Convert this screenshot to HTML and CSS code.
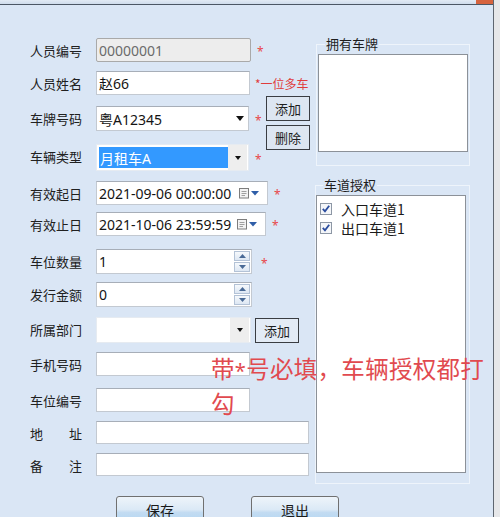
FILE: index.html
```html
<!DOCTYPE html>
<html lang="zh-CN">
<head>
<meta charset="utf-8">
<title>人员信息</title>
<link rel="stylesheet" href="styles.css">
</head>
<body>
<div class="window">
  <div class="titlebar"><span class="close"></span></div>
  <div class="content">
    <div class="form">
      <div class="lbl">人员编号</div>
      <div class="field"><div class="box disabled w155">00000001</div><span class="req">*</span></div>

      <div class="lbl">人员姓名</div>
      <div class="field"><div class="box w154">赵66</div><span class="hint">*一位多车</span></div>

      <div class="btnstack">
        <div class="sbtn">添加</div>
        <div class="sbtn">删除</div>
      </div>

      <div class="lbl">车牌号码</div>
      <div class="field"><div class="box combo w153 h25"><span class="txt">粤A12345</span><span class="arrow"></span></div><span class="req">*</span></div>

      <div class="lbl">车辆类型</div>
      <div class="field"><div class="box combo2 w153 h27"><span class="sel">月租车A</span><span class="dd"><span class="arrow small"></span></span></div><span class="req">*</span></div>

      <div class="lbl">有效起日</div>
      <div class="field"><div class="box date w172"><span class="txt">2021-09-06 00:00:00</span>
        <svg class="cal" width="12" height="12" viewBox="0 0 12 12"><rect x="1.5" y="1.5" width="9" height="9.5" fill="#f3f3f3" stroke="#7d7d7d"/><path d="M3.5 4.5h5M3.5 6.5h5M3.5 8.5h3.5" stroke="#a0a0a0"/></svg>
        <svg class="darr" width="8" height="5" viewBox="0 0 8 5"><path d="M0 0h8L4 4.5z" fill="#2f5ea8"/></svg></div><span class="req">*</span></div>

      <div class="lbl">有效止日</div>
      <div class="field"><div class="box date w170"><span class="txt">2021-10-06 23:59:59</span>
        <svg class="cal" width="12" height="12" viewBox="0 0 12 12"><rect x="1.5" y="1.5" width="9" height="9.5" fill="#f3f3f3" stroke="#7d7d7d"/><path d="M3.5 4.5h5M3.5 6.5h5M3.5 8.5h3.5" stroke="#a0a0a0"/></svg>
        <svg class="darr" width="8" height="5" viewBox="0 0 8 5"><path d="M0 0h8L4 4.5z" fill="#2f5ea8"/></svg></div><span class="req">*</span></div>

      <div class="lbl">车位数量</div>
      <div class="field"><div class="box spin w156 h25"><span class="txt">1</span>
        <span class="spinner"><span class="sb"><svg width="7" height="4" viewBox="0 0 7 4"><path d="M0 4L3.5 0 7 4z" fill="#4a6a96"/></svg></span><span class="sb"><svg width="7" height="4" viewBox="0 0 7 4"><path d="M0 0h7L3.5 4z" fill="#4a6a96"/></svg></span></span></div><span class="req far">*</span></div>

      <div class="lbl">发行金额</div>
      <div class="field"><div class="box spin w156 h25"><span class="txt">0</span>
        <span class="spinner"><span class="sb"><svg width="7" height="4" viewBox="0 0 7 4"><path d="M0 4L3.5 0 7 4z" fill="#4a6a96"/></svg></span><span class="sb"><svg width="7" height="4" viewBox="0 0 7 4"><path d="M0 0h7L3.5 4z" fill="#4a6a96"/></svg></span></span></div></div>

      <div class="lbl">所属部门</div>
      <div class="field"><div class="box combo2 plain w155 h26"><span class="sel blank"></span><span class="dd"><span class="arrow small"></span></span></div><div class="sbtn dept">添加</div></div>

      <div class="lbl">手机号码</div>
      <div class="field"><div class="box w154"></div></div>

      <div class="lbl">车位编号</div>
      <div class="field"><div class="box w154"></div></div>

      <div class="lbl">地　　址</div>
      <div class="field"><div class="box w213 h23"></div></div>

      <div class="lbl">备　　注</div>
      <div class="field"><div class="box w213 h23"></div></div>

      <div class="actions">
        <div class="btn">保存</div>
        <div class="btn">退出</div>
      </div>
    </div>

    <div class="side">
      <fieldset class="group g1">
        <legend>拥有车牌</legend>
        <div class="listbox plates"></div>
      </fieldset>
      <fieldset class="group g2">
        <legend>车道授权</legend>
        <div class="listbox lanes">
          <div class="item"><svg width="12" height="12" viewBox="0 0 12 12"><rect x=".5" y=".5" width="11" height="11" fill="#f4f6f9" stroke="#8d97a5"/><path d="M2.8 5.8l2.2 2.6 4.2-5.6" stroke="#2a4c9e" stroke-width="1.8" fill="none"/></svg><span>入口车道1</span></div>
          <div class="item"><svg width="12" height="12" viewBox="0 0 12 12"><rect x=".5" y=".5" width="11" height="11" fill="#f4f6f9" stroke="#8d97a5"/><path d="M2.8 5.8l2.2 2.6 4.2-5.6" stroke="#2a4c9e" stroke-width="1.8" fill="none"/></svg><span>出口车道1</span></div>
        </div>
      </fieldset>
    </div>
  </div>
  <div class="note">带<span class="nstar">*</span>号必填，车辆授权都打<br>勾</div>
</div>
</body>
</html>
```

FILE: styles.css
```css
html, body {
  margin: 0;
  padding: 0;
}
body {
  width: 500px;
  height: 517px;
  overflow: hidden;
  background: #e6e7e9;
  font-family: "Noto Sans CJK SC", "Noto Sans", sans-serif;
  color: #1e1e1e;
}
.window {
  position: relative;
  width: 493px;
  height: 517px;
  background: #dae6f5;
  border-right: 1px solid #5e6670;
  overflow: hidden;
}
.titlebar {
  height: 4px;
  background: linear-gradient(#e2eaf4, #cfdcec);
  border-bottom: 1px solid #4c5765;
  display: flex;
  justify-content: flex-end;
}
.close {
  width: 17px;
  height: 4px;
  background: #d6633e;
}
.content {
  display: flex;
}
.form {
  width: 316px;
  flex-shrink: 0;
  display: grid;
  grid-template-columns: 95px 171px 50px;
  grid-template-rows: 33px 35px 38px 37px 31px 37px 33px 35px 35px 36px 33px 32px 43px 30px;
  padding-top: 33px;
}
.lbl {
  grid-column: 1;
  height: 24px;
  display: flex;
  align-items: center;
  padding-left: 30px;
  font-size: 13px;
  color: #202020;
  white-space: nowrap;
}
.field {
  grid-column: 2;
  display: flex;
  align-items: center;
  align-self: start;
  padding-left: 1px;
  white-space: nowrap;
}
.box {
  flex-shrink: 0;
  box-sizing: border-box;
  height: 24px;
  background: #ffffff;
  border: 1px solid #c3c9d1;
  border-top-color: #a7aeb8;
  display: flex;
  align-items: center;
  padding-left: 2px;
  font-family: "Noto Sans", "Noto Sans CJK SC", sans-serif;
  font-size: 14px;
  color: #141414;
}
.box.disabled {
  background: #ededed;
  border-color: #a9a9a9;
  border-radius: 2px;
  color: #6b6b6b;
}
.w153 { width: 153px; }
.w154 { width: 154px; }
.w155 { width: 155px; }
.w156 { width: 156px; }
.w170 { width: 170px; }
.w172 { width: 172px; }
.w213 { width: 213px; }
.h23 { height: 23px; }
.h25 { height: 25px; }
.h26 { height: 26px; }
.h27 { height: 27px; }
.txt {
  flex: 1;
  white-space: nowrap;
}
.arrow {
  width: 0;
  height: 0;
  border-left: 4px solid transparent;
  border-right: 4px solid transparent;
  border-top: 5px solid #111;
  margin-right: 4px;
}
.arrow.small {
  border-left-width: 3px;
  border-right-width: 3px;
  border-top-width: 4px;
  margin-right: 0;
}
.combo2 {
  padding: 2px 1px 2px 2px;
  border-color: #e6ebf1;
}
.combo2 .sel {
  flex: 1;
  align-self: stretch;
  background: #3399ff;
  color: #ffffff;
  display: flex;
  align-items: center;
  padding-left: 1px;
}
.combo2 .sel.blank {
  background: #ffffff;
}
.combo2 .dd {
  width: 19px;
  align-self: stretch;
  margin: -2px 0 -2px 0;
  background: #eeeeee;
  display: flex;
  align-items: center;
  justify-content: center;
}
.date .cal {
  margin-right: 1px;
}
.date .darr {
  margin-right: 8px;
}
.spin .spinner {
  display: flex;
  flex-direction: column;
  gap: 1px;
  margin-right: 1px;
}
.sb {
  box-sizing: border-box;
  width: 16px;
  height: 10px;
  border: 1px solid #b3c2d6;
  background: linear-gradient(#f6f9fc, #dde7f3);
  display: flex;
  align-items: center;
  justify-content: center;
}
.req {
  color: #e8474a;
  font-family: "Noto Sans", sans-serif;
  font-size: 12px;
  margin-left: 6px;
  padding-top: 3px;
}
.req.far {
  margin-left: 9px;
}
.hint {
  color: #e03c3c;
  font-size: 12px;
  margin-left: 5px;
}
.btnstack {
  grid-column: 3;
  grid-row: 3 / span 2;
  align-self: start;
  margin-top: -10px;
  display: flex;
  flex-direction: column;
  gap: 4px;
}
.sbtn {
  box-sizing: border-box;
  width: 44px;
  height: 25px;
  border: 1px solid #3a3d42;
  background: #dde6f1;
  display: flex;
  align-items: center;
  justify-content: center;
  font-size: 13px;
  color: #1e1e1e;
}
.sbtn.dept {
  flex-shrink: 0;
  margin-left: 4px;
  background: #e3ebf5;
}
.actions {
  grid-column: 1 / -1;
  display: flex;
  gap: 47px;
  padding-left: 116px;
}
.btn {
  flex-shrink: 0;
  box-sizing: border-box;
  width: 88px;
  height: 30px;
  border: 1px solid #707070;
  border-radius: 3px;
  background: linear-gradient(#eef4fa, #dbe9f6 45%, #c3dcf2 55%, #b0d3f1);
  text-align: center;
  line-height: 26px;
  font-size: 14px;
  color: #1a1a1a;
}
.side {
  padding-top: 31px;
}
.group {
  box-sizing: border-box;
  margin: 0;
  border: 1px solid #eef4fb;
  min-width: 0;
}
.group legend {
  margin-left: 7px;
  padding: 0 1px;
  font-size: 13px;
  line-height: 16px;
  color: #1e1e1e;
}
.g1 {
  width: 154px;
  padding: 0 1px 13px 1px;
}
.g2 {
  width: 155px;
  margin-top: 11px;
  margin-left: -1px;
  padding: 0 0 10px 0;
}
.listbox {
  box-sizing: border-box;
  margin-top: 2px;
  width: 150px;
  background: #ffffff;
  border: 1px solid #8c9198;
}
.plates {
  height: 98px;
}
.lanes {
  height: 278px;
  padding: 3px 0 0 3px;
}
.item {
  height: 19px;
  display: flex;
  align-items: center;
  gap: 9px;
  font-size: 14px;
  color: #1a1a1a;
}
.note {
  position: absolute;
  left: 211px;
  top: 352px;
  width: 280px;
  font-size: 23.5px;
  line-height: 32px;
  letter-spacing: 0.3px;
  color: #e14a4f;
  white-space: nowrap;
}
.nstar {
  font-family: "Noto Sans", sans-serif;
  font-size: 20px;
}
```
